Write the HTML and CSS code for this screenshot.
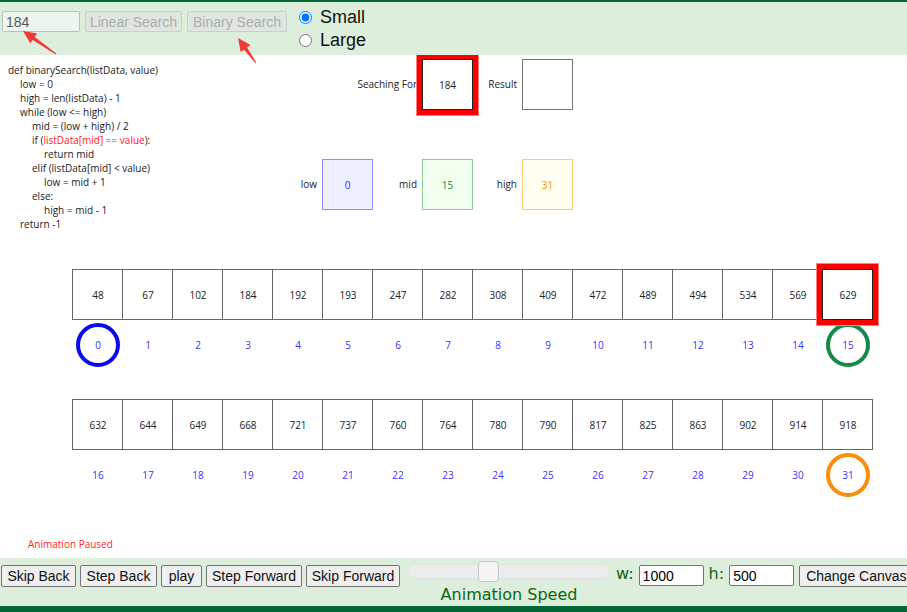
FILE: index.html
```html
<!DOCTYPE html>
<html>
<head>
<meta charset="utf-8">
<link rel="stylesheet" href="styles.css">
</head>
<body>
<div class="page">
  <div class="topbar">
    <input class="search-input" type="text" value="184">
    <button class="dis-btn lin" disabled>Linear Search</button>
    <button class="dis-btn bin" disabled>Binary Search</button>
    <div class="radios">
      <label class="radio"><input type="radio" name="size" checked>Small</label>
      <label class="radio"><input type="radio" name="size">Large</label>
    </div>
  </div>

  <div class="canvas">
    <div class="top-section">
      <div class="code">
        <div class="l0">def binarySearch(listData, value)</div>
        <div class="l1">low = 0</div>
        <div class="l1">high = len(listData) - 1</div>
        <div class="l1">while (low &lt;= high)</div>
        <div class="l2">mid = (low + high) / 2</div>
        <div class="l2">if (<span class="hl">listData[mid] == value</span>):</div>
        <div class="l3">return mid</div>
        <div class="l2">elif (listData[mid] &lt; value)</div>
        <div class="l3">low = mid + 1</div>
        <div class="l2">else:</div>
        <div class="l3">high = mid - 1</div>
        <div class="l1">return -1</div>
      </div>
      <div class="vars">
        <div class="var"></div>
        <div class="var"><span class="vlabel">Seaching For</span><span class="vbox searching">184</span></div>
        <div class="var"><span class="vlabel">Result</span><span class="vbox result"></span></div>
        <div class="var"><span class="vlabel">low</span><span class="vbox low">0</span></div>
        <div class="var"><span class="vlabel">mid</span><span class="vbox mid">15</span></div>
        <div class="var"><span class="vlabel">high</span><span class="vbox high">31</span></div>
      </div>
    </div>

    <div class="array">
      <div class="cells">
        <div class="cell">48</div><div class="cell">67</div><div class="cell">102</div><div class="cell">184</div>
        <div class="cell">192</div><div class="cell">193</div><div class="cell">247</div><div class="cell">282</div>
        <div class="cell">308</div><div class="cell">409</div><div class="cell">472</div><div class="cell">489</div>
        <div class="cell">494</div><div class="cell">534</div><div class="cell">569</div><div class="cell current">629</div>
      </div>
      <div class="indices">
        <div class="idx"><span class="ring blue">0</span></div><div class="idx">1</div><div class="idx">2</div><div class="idx">3</div>
        <div class="idx">4</div><div class="idx">5</div><div class="idx">6</div><div class="idx">7</div>
        <div class="idx">8</div><div class="idx">9</div><div class="idx">10</div><div class="idx">11</div>
        <div class="idx">12</div><div class="idx">13</div><div class="idx">14</div><div class="idx"><span class="ring green">15</span></div>
      </div>
      <div class="cells second">
        <div class="cell">632</div><div class="cell">644</div><div class="cell">649</div><div class="cell">668</div>
        <div class="cell">721</div><div class="cell">737</div><div class="cell">760</div><div class="cell">764</div>
        <div class="cell">780</div><div class="cell">790</div><div class="cell">817</div><div class="cell">825</div>
        <div class="cell">863</div><div class="cell">902</div><div class="cell">914</div><div class="cell">918</div>
      </div>
      <div class="indices">
        <div class="idx">16</div><div class="idx">17</div><div class="idx">18</div><div class="idx">19</div>
        <div class="idx">20</div><div class="idx">21</div><div class="idx">22</div><div class="idx">23</div>
        <div class="idx">24</div><div class="idx">25</div><div class="idx">26</div><div class="idx">27</div>
        <div class="idx">28</div><div class="idx">29</div><div class="idx">30</div><div class="idx"><span class="ring orange">31</span></div>
      </div>
    </div>

    <div class="status">Animation Paused</div>
  </div>

  <div class="bottombar">
    <div class="controls">
      <button class="ctl w-skipback">Skip Back</button>
      <button class="ctl w-stepback">Step Back</button>
      <button class="ctl w-play">play</button>
      <button class="ctl w-stepfwd">Step Forward</button>
      <button class="ctl w-skipfwd">Skip Forward</button>
    </div>
    <div class="speed">
      <div class="track"><div class="thumb"></div></div>
      <div class="speed-label">Animation Speed</div>
    </div>
    <span class="dim-label">w:</span>
    <input class="dim-input" type="text" value="1000">
    <span class="dim-label h">h:</span>
    <input class="dim-input" type="text" value="500">
    <button class="ctl change">Change Canvas</button>
  </div>

  <svg class="arrows" width="907" height="612" viewBox="0 0 907 612">
    <polygon fill="#f03a3a" points="23,31 37.1,33.5 34.7,36.9 56.3,53.6 55.7,54.4 32.7,39.9 30.3,43.3"/>
    <polygon fill="#f03a3a" points="238,38 250.5,45.1 247.1,47.5 256.4,62.7 255.6,63.3 244.1,49.7 240.7,52.1"/>
  </svg>
</div>
</body>
</html>
```

FILE: styles.css
```css
html, body {
  margin: 0;
  padding: 0;
  background: #fff;
  overflow: hidden;
}
.page {
  position: relative;
  width: 907px;
  height: 612px;
  overflow: hidden;
  font-family: "Liberation Sans", Arial, sans-serif;
}

/* ---------- top bar ---------- */
.topbar {
  height: 53px;
  border-top: 2px solid #006633;
  background: #ddeedc;
  display: flex;
  align-items: flex-start;
  white-space: nowrap;
}
.search-input {
  box-sizing: border-box;
  width: 78px;
  height: 21px;
  margin: 9px 0 0 2px;
  padding: 0 0 0 3px;
  border: 1px solid #b8c4b8;
  border-radius: 2px;
  background: #eef5ee;
  color: #555;
  font: 14px "Liberation Sans", Arial, sans-serif;
}
.dis-btn {
  box-sizing: border-box;
  height: 21px;
  margin: 9px 0 0 5px;
  padding: 0;
  border: 1px solid #c6d2c6;
  border-radius: 2px;
  background: #dfe6df;
  color: #a9b1a9;
  font: 14px "Liberation Sans", Arial, sans-serif;
}
.dis-btn.lin { width: 97px; }
.dis-btn.bin { width: 100px; }
.radios {
  margin: 4px 0 0 10px;
  display: flex;
  flex-direction: column;
}
.radio {
  display: flex;
  align-items: center;
  height: 23px;
  font: 18px "Liberation Sans", Arial, sans-serif;
  color: #111;
}
.radio input {
  width: 13px;
  height: 13px;
  margin: 0 8px 0 2px;
}

/* ---------- canvas ---------- */
.canvas {
  height: 503px;
  overflow: hidden;
  font-family: "Open Sans", "Noto Sans", sans-serif;
  font-size: 10px;
  color: #222;
}
.top-section {
  height: 214px;
  display: flex;
  align-items: flex-start;
}
.code {
  flex: 0 0 265px;
  padding: 8px 0 0 8px;
  line-height: 14px;
  white-space: nowrap;
}
.code .l1 { padding-left: 12px; }
.code .l2 { padding-left: 24px; }
.code .l3 { padding-left: 36px; }
.code .hl { color: #ff2020; }

.vars {
  margin-top: 4px;
  display: grid;
  grid-template-columns: repeat(3, 100px);
  row-gap: 49px;
}
.var {
  height: 51px;
  display: flex;
  justify-content: flex-end;
  align-items: center;
  gap: 5px;
  white-space: nowrap;
}
.vlabel { flex-shrink: 0; margin-top: -1px; }
.vbox {
  box-sizing: border-box;
  flex: 0 0 51px;
  height: 51px;
  border: 1px solid #777;
  display: flex;
  align-items: center;
  justify-content: center;
}
.vbox.searching {
  border-color: #222;
  box-shadow: 0 0 0 5px #ff0000, 0 0 0 6px #ff8080;
}
.vbox.low { background: #eff0ff; border-color: #8f8ff8; color: #2a2aff; }
.vbox.mid { background: #f0fff0; border-color: #8ccc9c; color: #118844; }
.vbox.high { background: #fffff0; border-color: #ffca7a; color: #ff8c00; }

.array {
  padding-left: 72px;
}
.cells {
  display: flex;
}
.cells.second { margin-top: 32px; }
.cell {
  box-sizing: border-box;
  flex: 0 0 51px;
  height: 51px;
  margin-right: -1px;
  padding-left: 1px;
  border: 1px solid #666;
  display: flex;
  align-items: center;
  justify-content: center;
}
.cell.current {
  position: relative;
  z-index: 1;
  border-color: #222;
  box-shadow: 0 0 0 5px #ff0000, 0 0 0 6px #ff8080;
}
.indices {
  display: flex;
  margin-top: 3px;
  padding-left: 1px;
}
.idx {
  flex: 0 0 50px;
  height: 44px;
  display: flex;
  align-items: center;
  justify-content: center;
  color: #3434ff;
}
.ring {
  box-sizing: border-box;
  width: 44px;
  height: 44px;
  border-radius: 50%;
  border: 4px solid;
  display: flex;
  align-items: center;
  justify-content: center;
  color: #3434ff;
}
.ring.blue { border-color: #0a0aee; }
.ring.green { border-color: #14894a; }
.ring.orange { border-color: #fb8c0c; }

.status {
  margin: 40px 0 0 28px;
  line-height: 14px;
  color: #ff2424;
}

/* ---------- bottom bar ---------- */
.bottombar {
  height: 48px;
  background: #ddeedc;
  border-bottom: 6px solid #006633;
  display: flex;
  align-items: flex-start;
  white-space: nowrap;
}
.controls {
  display: flex;
  gap: 4px;
  margin: 7px 0 0 1px;
}
.ctl {
  box-sizing: border-box;
  height: 22px;
  padding: 0;
  border: 1px solid #767676;
  border-radius: 2px;
  background: #efefef;
  color: #111;
  font: 14px "Liberation Sans", Arial, sans-serif;
}
.w-skipback { width: 75px; }
.w-stepback { width: 77px; }
.w-play { width: 41px; }
.w-stepfwd { width: 96px; }
.w-skipfwd { width: 94px; }
.speed {
  margin: 3px 0 0 8px;
  width: 202px;
  display: flex;
  flex-direction: column;
  align-items: center;
}
.track {
  box-sizing: border-box;
  width: 202px;
  height: 15px;
  margin-top: 3px;
  border: 1px solid #e2e2e2;
  border-radius: 8px;
  background: #ececec;
  display: flex;
  align-items: center;
}
.thumb {
  box-sizing: border-box;
  flex: 0 0 21px;
  height: 21px;
  margin-left: 69px;
  border: 1px solid #c8c8c8;
  border-radius: 4px;
  background: #f4f4f4;
}
.speed-label {
  margin-top: 6px;
  line-height: 20px;
  font: 16px "DejaVu Sans", Verdana, sans-serif;
  color: #0e660e;
}
.dim-label {
  margin: 6px 0 0 6px;
  line-height: 20px;
  font: 16px "DejaVu Sans", Verdana, sans-serif;
  color: #0e660e;
}
.dim-label.h { margin-left: 5px; }
.dim-input {
  box-sizing: border-box;
  width: 65px;
  height: 21px;
  margin: 7px 0 0 5px;
  padding: 0 0 0 3px;
  border: 1px solid #767676;
  border-radius: 2px;
  background: #fff;
  color: #000;
  font: 14px "Liberation Sans", Arial, sans-serif;
}
.change {
  flex: 0 0 auto;
  margin: 7px 0 0 5px;
  padding: 0 6px;
}

.arrows {
  position: absolute;
  left: 0;
  top: 0;
  pointer-events: none;
}
```
